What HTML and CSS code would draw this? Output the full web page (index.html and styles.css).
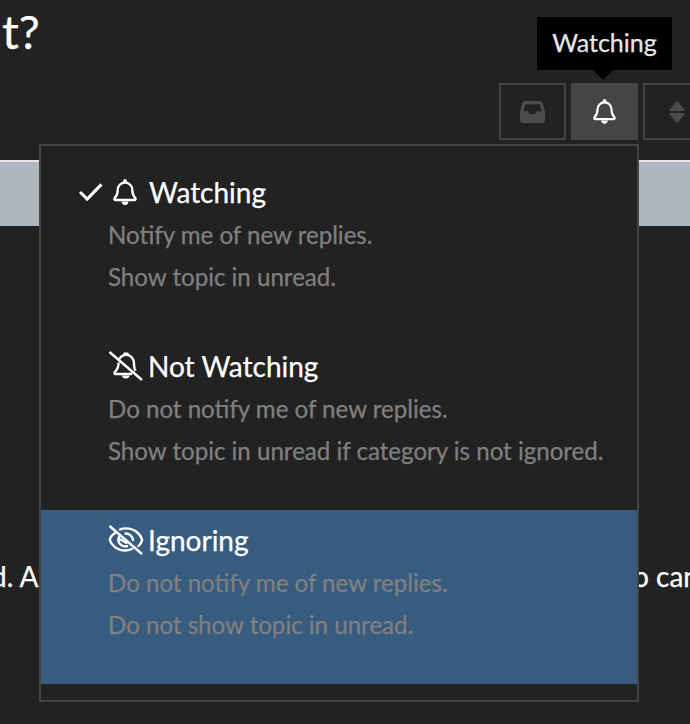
FILE: index.html
```html
<!DOCTYPE html>
<html lang="en">
<head>
<meta charset="utf-8">
<title>Watching menu</title>
<link rel="stylesheet" href="styles.css">
</head>
<body>
<div class="page">
  <header class="head">
    <h1 class="title">t?</h1>
    <div class="actions">
      <button class="btn" type="button">
        <svg class="inbox" viewBox="0 0 25 22"><path fill="#4c4c4c" fill-rule="evenodd" d="M5 0h15c1.300 0 2.300.8 2.700 2L25 11v8c0 1.700-1.300 3-3 3H3c-1.700 0-3-1.300-3-3v-8L2.300 2C2.700.8 3.700 0 5 0zM5.200 3.200 3.500 10.200H8l1.500 2.800h6l1.500-2.800h4.500L19.800 3.200z"/></svg>
      </button>
      <button class="btn btn-active" type="button">
        <svg class="bell" viewBox="0 0 24 26"><use href="#i-bell"/></svg>
      </button>
      <button class="btn" type="button">
        <svg class="sort" viewBox="0 0 16 22"><path fill="#4c4c4c" stroke="#4c4c4c" stroke-width="1.500" stroke-linejoin="round" d="M8 1 15 9.300H1zM1 12.700h14L8 21z"/></svg>
      </button>
    </div>
  </header>
  <div class="band"></div>
  <div class="body-line"><span class="line-start">d. A</span><span class="line-end">o can</span></div>
</div>

<div class="tooltip">Watching</div>

<ul class="menu">
  <li class="item">
    <div class="item-title">
      <svg class="check" viewBox="0 0 26 20"><path d="M2 10.500 9.500 18 24.500 2.500" fill="none" stroke="#fff" stroke-width="3.200"/></svg>
      <svg class="bell" viewBox="0 0 24 26"><use href="#i-bell"/></svg>
      <span>Watching</span>
    </div>
    <p class="desc">Notify me of new replies.</p>
    <p class="desc">Show topic in unread.</p>
  </li>
  <li class="item">
    <div class="item-title">
      <svg class="state-icon" viewBox="0 0 36 30">
        <path fill="none" stroke="#fff" stroke-width="2.400" stroke-linejoin="round" d="M10.500 9.500C11 8 11.800 6.800 13 5.800c1.500-1.300 3.300-2 5-2 4.500 0 8 3.500 8 9 0 3 .6 5.500 1.500 7M10.500 11.500V13c0 4-2.200 6.500-4 8.500 -.3.800 0 1.500 1 1.500H24"/>
        <path fill="#fff" d="M15.500 1.500h5v3.500h-5zM14 24.500h7.500c0 1.800-1.700 3-3.700 3s-3.800-1.200-3.800-3z"/>
        <path fill="none" stroke="#fff" stroke-width="2.400" d="M1.500 1 34 29"/>
      </svg>
      <span>Not Watching</span>
    </div>
    <p class="desc">Do not notify me of new replies.</p>
    <p class="desc">Show topic in unread if category is not ignored.</p>
  </li>
  <li class="item item-selected">
    <div class="item-title">
      <svg class="state-icon" viewBox="0 0 36 30">
        <path fill="none" stroke="#fff" stroke-width="2.400" stroke-linecap="round" d="M7 8C3.800 10 2.200 12.500 1.800 15c1.500 5 7 10.500 15.200 10.500 2.500 0 4.800-.5 7-1.500M12 4.500C13.800 3.700 15.500 3.400 18 3.400c8 0 14.500 5.300 16.200 11.600-.6 2.300-1.900 4.300-3.700 6"/>
        <path fill="none" stroke="#fff" stroke-width="2.400" stroke-linecap="round" d="M11 12C10 14.500 10.200 17 12 19c1.800 2 4.500 2.700 7 2.200M17.500 8.500c3.800-.2 7.200 2.800 7.500 6.500M12.500 14.500l6 3.500"/>
        <path fill="none" stroke="#fff" stroke-width="2.400" d="M1.500 1 34 29"/>
      </svg>
      <span>Ignoring</span>
    </div>
    <p class="desc">Do not notify me of new replies.</p>
    <p class="desc">Do not show topic in unread.</p>
  </li>
</ul>

<svg class="defs" width="0" height="0" aria-hidden="true">
  <symbol id="i-bell" viewBox="0 0 24 26">
    <path fill="none" stroke="#fff" stroke-width="2.300" stroke-linejoin="round" d="M12 3.500c-4.300 0-7.300 3.300-7.300 7.500 0 4.700-1.600 6.600-3.100 8.200-.5.800-.1 1.800 1 1.800h18.800c1.100 0 1.500-1 1-1.800-1.500-1.600-3.100-3.500-3.100-8.200 0-4.200-3-7.500-7.300-7.500z"/>
    <path fill="#fff" d="M10.200 1.800c0-1 .8-1.800 1.800-1.800s1.800.8 1.800 1.800v2.200h-3.600zM8.500 22.500h7c0 1.900-1.500 3.500-3.500 3.500s-3.500-1.600-3.500-3.500z"/>
  </symbol>
</svg>
</body>
</html>
```

FILE: styles.css
```css
* { box-sizing: border-box; }
html, body { margin: 0; padding: 0; }
body {
  width: 690px;
  height: 724px;
  overflow: hidden;
  position: relative;
  background: #222;
  color: #fff;
  font-family: Lato, "Liberation Sans", sans-serif;
  -webkit-text-stroke: 0.25px currentColor;
}
.page { display: flex; flex-direction: column; }
.head {
  height: 160px;
  display: flex;
  justify-content: space-between;
  align-items: flex-start;
  overflow: hidden;
}
.title {
  margin: 0;
  padding: 3px 0 0 2px;
  font-size: 47px;
  line-height: 56px;
  font-weight: 400;
}
.actions {
  display: flex;
  gap: 5px;
  margin-top: 83px;
  margin-right: -20px;
  flex: none;
}
.btn {
  width: 67px;
  height: 57px;
  padding: 0;
  background: #222;
  border: 2px solid #444;
  display: flex;
  align-items: center;
  justify-content: center;
}
.btn-active { background: #454545; border-color: #454545; }
.inbox { width: 25px; height: 22px; display: block; }
.sort { width: 16px; height: 22px; display: block; }
.btn .bell { width: 23px; height: 25px; display: block; }
.band {
  height: 66px;
  background: #aeb6c0;
  border-top: 2px solid #e6e6e6;
}
.body-line {
  margin-top: 333px;
  display: flex;
  justify-content: space-between;
  font-size: 28px;
  line-height: 34px;
  white-space: nowrap;
  overflow: hidden;
}
.line-start { margin-left: -9px; }
.line-end { margin-right: -9px; }

.tooltip {
  position: absolute;
  left: 537px;
  top: 17px;
  width: 135px;
  height: 53px;
  background: #000;
  color: #e6e6e6;
  font-size: 25px;
  line-height: 51px;
  text-align: center;
}
.tooltip::after {
  content: "";
  position: absolute;
  left: 56px;
  top: 53px;
  border: 10px solid transparent;
  border-top-color: #000;
  border-bottom-width: 0;
}

.menu {
  position: absolute;
  left: 39px;
  top: 144px;
  width: 600px;
  height: 558px;
  margin: 0;
  padding: 16px 0;
  list-style: none;
  background: #222;
  border: 2px solid #444;
}
.item {
  height: 174px;
  padding: 14px 0 0 67px;
}
.item-selected { background: #385c80; }
.item-title {
  height: 32px;
  display: flex;
  align-items: center;
  gap: 4px;
  position: relative;
  font-size: 28px;
  line-height: 30px;
}
.item-title .bell {
  width: 24px;
  height: 26px;
  margin-left: 5px;
  margin-right: 8px;
}
.check {
  position: absolute;
  left: -30px;
  top: 6px;
  width: 25px;
  height: 19px;
}
.state-icon { width: 36px; height: 30px; flex: none; }
.desc {
  margin: 10px 0 0;
  height: 32px;
  color: #808080;
  font-size: 24.100px;
  line-height: 34px;
  white-space: nowrap;
}
.defs { position: absolute; }
```
